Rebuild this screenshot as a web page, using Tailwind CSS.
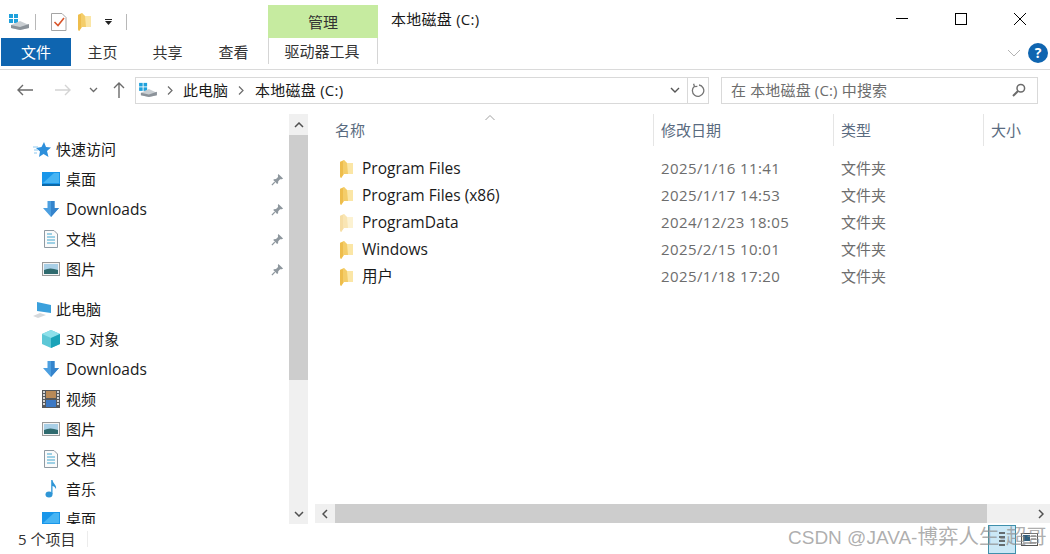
<!DOCTYPE html>
<html lang="zh">
<head>
<meta charset="utf-8">
<script src="https://cdn.jsdelivr.net/npm/@tailwindcss/browser@4"></script>
<title>本地磁盘 (C:)</title>
</head>
<body class="w-[1050px] h-[554px] overflow-hidden bg-white text-[15px] text-[#1a1a1a] font-['Open_Sans','Noto_Sans_CJK_SC',sans-serif] relative">
<svg class="hidden">
  <defs>
    <symbol id="drive" viewBox="0 0 22 18"><rect x="1" y="1" width="4" height="4" fill="#1fa1dc"/><rect x="6" y="1" width="4" height="4" fill="#1fa1dc"/><rect x="1" y="6" width="4" height="4" fill="#1fa1dc"/><rect x="6" y="6" width="4" height="4" fill="#1fa1dc"/><path d="M3 12 L12 8 L21 12 L21 15 L12 17 L3 15Z" fill="#c9ced2"/><path d="M3 12 L12 14 L21 11 L21 15 L12 17 L3 15Z" fill="#8b9299"/></symbol>
    <symbol id="folder" viewBox="0 0 13 18"><path d="M0 2 L4 0 L7 3 L13 3 L13 14 L4 14 L1 18 L0 16Z" fill="#fbe6a6"/><path d="M0 2 L4 0 L7 3 L8 14 L4 14 L1 18 L0 16Z" fill="#f4cd69"/><path d="M0 2 L3 1 L3 15 L1 18 L0 16Z" fill="#eebd4c"/></symbol>
    <symbol id="desktop" viewBox="0 0 18 14"><rect width="18" height="14" fill="#1896ea"/><path d="M1 11 L12 1 L17 1 L17 11Z" fill="#47b4f3"/><rect y="12" width="18" height="2" fill="#0b68a8"/></symbol>
    <symbol id="down" viewBox="0 0 18 18"><path d="M5.500 1 H12.500 V8 H17 L9 17 L1 8 H5.500Z" fill="#4c9fe0"/><path d="M9 1 H12.500 V8 H17 L9 17Z" fill="#3584cc"/></symbol>
    <symbol id="doc" viewBox="0 0 14 18"><path d="M.5.5 H10 L13.500 4 V17.500 H.5Z" fill="#fafafa" stroke="#8f9aa3"/><path d="M3 4 H8 M3 7 H11 M3 10 H11 M3 13 H11" stroke="#41a5cf" stroke-width="1.200"/></symbol>
    <symbol id="pic" viewBox="0 0 18 14"><rect x=".5" y=".5" width="17" height="13" fill="#f4f4f4" stroke="#9a9a9a"/><rect x="2" y="2" width="14" height="10" fill="#a9cfe6"/><path d="M2 8 Q8 5 16 8 V12 H2Z" fill="#2f6a6e"/></symbol>
    <symbol id="pin" viewBox="0 0 14 14"><path d="M8 1 L13 6 L11.600 6.800 L9.800 6.600 L7.800 8.800 L7.600 11 L6.600 11.800 L2.400 7.600 L3.200 6.600 L5.400 6.400 L7.600 4.400 L7.400 2.400Z" fill="#8e979e"/><path d="M4 9.800 L1 13" stroke="#8e979e" stroke-width="1.400"/></symbol>
  </defs>
</svg>

<header class="h-[38px] flex items-end relative">
  <div class="w-[268px] h-[38px] flex items-center pl-[8px] pt-[5px]">
    <svg class="w-[22px] h-[18px]"><use href="#drive"/></svg>
    <div class="w-px h-4 bg-[#b8b8b8] ml-[5px]"></div>
    <svg class="w-[16px] h-[18px] ml-[15px]" viewBox="0 0 16 18"><path d="M.5.5 H11 L15 4.500 V17.500 H.5Z" fill="#fff" stroke="#a5a5a5"/><path d="M3.500 9 L7 12.500 L13 5" fill="none" stroke="#d9552b" stroke-width="1.600"/></svg>
    <svg class="w-[13px] h-[18px] ml-[11px]"><use href="#folder"/></svg>
    <svg class="w-[7px] h-[6px] ml-[14px]" viewBox="0 0 7 6"><path d="M0 0 H7 V1 H0Z M0 2 H7 L3.500 6Z" fill="#222"/></svg>
    <div class="w-px h-4 bg-[#b8b8b8] ml-[14px]"></div>
  </div>
  <div class="w-[110px] h-[33px] pt-[2px] bg-[#c6eba0] flex items-center justify-center text-[#333]">管理</div>
  <div class="ml-[13px] self-start pt-[9px] leading-[20px] tracking-[.25px]">本地磁盘 (C:)</div>
  <div class="ml-auto self-start flex h-[38px]">
    <div class="w-[59px] flex items-center justify-center pb-[1px]"><div class="w-3 h-px bg-black mb-[1px]"></div></div>
    <div class="w-[59px] flex items-center justify-center"><div class="w-3 h-3 border border-black"></div></div>
    <div class="w-[60px] flex items-center justify-center"><svg class="w-3 h-3" viewBox="0 0 12 12"><path d="M0 0 L12 12 M12 0 L0 12" stroke="#000" stroke-width="1"/></svg></div>
  </div>
</header>

<nav class="h-[32px] flex items-start border-b border-[#dadada] text-[#333]">
  <div class="ml-px w-[70px] h-[28px] bg-[#0f65b0] text-white flex items-center justify-center">文件</div>
  <div class="w-[65px] h-[28px] flex items-center justify-center pr-[2px]">主页</div>
  <div class="w-[65px] h-[28px] flex items-center justify-center pr-[2px]">共享</div>
  <div class="w-[65px] h-[28px] flex items-center justify-center">查看</div>
  <div class="ml-[2px] w-[110px] h-[26px] border-x border-[#d5d5d5] flex items-center justify-center pr-[2px]">驱动器工具</div>
  <div class="ml-auto flex items-center h-[28px] pr-[2px]">
    <svg class="w-[12px] h-[7px] mr-[8px] mt-[2px]" viewBox="0 0 12 7"><path d="M0 0 L6 6 L12 0" fill="none" stroke="#b3b3b3"/></svg>
    <div class="w-5 h-5 rounded-full bg-[#0f65b0] text-white text-[14px] font-bold flex items-center justify-center leading-none mt-[2px]">?</div>
  </div>
</nav>

<div class="h-[40px] flex items-center">
  <div class="w-[135px] flex items-center shrink-0 pl-[17px]">
    <svg class="w-[16px] h-[12px]" viewBox="0 0 16 12"><path d="M16 6 H1 M6 1 L1 6 L6 11" fill="none" stroke="#6b6b6b" stroke-width="1.400"/></svg>
    <svg class="w-[16px] h-[12px] ml-[22px]" viewBox="0 0 16 12"><path d="M0 6 H15 M10 1 L15 6 L10 11" fill="none" stroke="#d4d4d4" stroke-width="1.400"/></svg>
    <svg class="w-[9px] h-[6px] ml-[18px]" viewBox="0 0 9 6"><path d="M1 1 L4.500 4.500 L8 1" fill="none" stroke="#6b6b6b" stroke-width="1.300"/></svg>
    <svg class="w-[12px] h-[16px] ml-[15px]" viewBox="0 0 12 16"><path d="M6 16 V1 M1 6 L6 1 L11 6" fill="none" stroke="#6b6b6b" stroke-width="1.400"/></svg>
  </div>
  <div class="w-[574px] h-[27px] border border-[#d9d9d9] flex items-center shrink-0">
    <svg class="w-[20px] h-[16px] ml-[2px]"><use href="#drive"/></svg>
    <svg class="w-[6px] h-[9px] ml-[9px]" viewBox="0 0 6 9"><path d="M1 .5 L5 4.500 L1 8.500" fill="none" stroke="#6b6b6b" stroke-width="1.200"/></svg>
    <span class="ml-[10px]">此电脑</span>
    <svg class="w-[6px] h-[9px] ml-[10px]" viewBox="0 0 6 9"><path d="M1 .5 L5 4.500 L1 8.500" fill="none" stroke="#6b6b6b" stroke-width="1.200"/></svg>
    <span class="ml-[11px] tracking-[.25px]">本地磁盘 (C:)</span>
    <svg class="w-[10px] h-[6px] ml-auto mr-[7px]" viewBox="0 0 10 6"><path d="M1 1 L5 5 L9 1" fill="none" stroke="#555" stroke-width="1.400"/></svg>
    <div class="w-[21px] h-full border-l border-[#d9d9d9] flex items-center justify-center">
      <svg class="w-[14px] h-[15px]" viewBox="0 0 14 15"><path d="M8 2 A5.700 5.700 0 1 1 3.500 3.200 M2.600 .8 L3.500 3.600 L6.400 3.400" fill="none" stroke="#757575" stroke-width="1.300"/></svg>
    </div>
  </div>
  <div class="ml-[12px] w-[317px] h-[27px] border border-[#d9d9d9] flex items-center text-[#6d6d6d] pl-[9px] pr-[11px] shrink-0">
    <span class="tracking-[.15px]">在 本地磁盘 (C:) 中搜索</span>
    <svg class="w-[14px] h-[14px] ml-auto" viewBox="0 0 14 14"><circle cx="8.800" cy="5.200" r="3.800" fill="none" stroke="#6b6b6b" stroke-width="1.500"/><path d="M6 8 L1 13" stroke="#6b6b6b" stroke-width="2"/></svg>
  </div>
</div>

<main class="h-[414px] flex">
  <aside class="w-[289px] h-full overflow-hidden pt-[24px] shrink-0">
    <div class="h-[30px] flex items-center pl-[33px]"><svg class="w-[18px] h-[17px] mr-[5px]" viewBox="0 0 18 17"><path d="M11 1 L13 6 L18 6.500 L14 10 L15.500 16 L10.500 13 L6 16 L7 10.500 L3 7 L8.500 6Z" fill="#2d8fdb"/><path d="M0 6 H5 M1 9 H5 M1 12 H4" stroke="#8fc9ef"/></svg>快速访问</div>
    <div class="h-[30px] flex items-center pl-[42px] pr-[5px]"><svg class="w-[18px] h-[14px] mr-[6px]"><use href="#desktop"/></svg>桌面<svg class="w-[13px] h-[13px] ml-auto"><use href="#pin"/></svg></div>
    <div class="h-[30px] flex items-center pl-[42px] pr-[5px]"><svg class="w-[18px] h-[18px] mr-[6px]"><use href="#down"/></svg><span class="text-[15.500px] pt-[2px]">Downloads</span><svg class="w-[13px] h-[13px] ml-auto"><use href="#pin"/></svg></div>
    <div class="h-[30px] flex items-center pl-[44px] pr-[5px]"><svg class="w-[14px] h-[18px] mr-[8px]"><use href="#doc"/></svg>文档<svg class="w-[13px] h-[13px] ml-auto"><use href="#pin"/></svg></div>
    <div class="h-[30px] flex items-center pl-[42px] pr-[5px]"><svg class="w-[18px] h-[14px] mr-[6px]"><use href="#pic"/></svg>图片<svg class="w-[13px] h-[13px] ml-auto"><use href="#pin"/></svg></div>
    <div class="h-[30px] mt-[10px] flex items-center pl-[32px]"><svg class="w-[20px] h-[17px] mr-[4px]" viewBox="0 0 20 17"><path d="M5 1 L19 4 V12 L5 10Z" fill="#3aa0dc"/><path d="M1 15 L8 12 L14 14 L6 17Z" fill="#d6d9dc"/></svg>此电脑</div>
    <div class="h-[30px] flex items-center pl-[42px]"><svg class="w-[18px] h-[18px] mr-[6px]" viewBox="0 0 18 18"><path d="M9 0 L18 4 V14 L9 18 L0 14 V4Z" fill="#5cc7d6"/><path d="M9 0 L18 4 L9 8 L0 4Z" fill="#8de0ea"/><path d="M9 8 L18 4 V14 L9 18Z" fill="#1aa3b8"/></svg>3D 对象</div>
    <div class="h-[30px] flex items-center pl-[42px]"><svg class="w-[18px] h-[18px] mr-[6px]"><use href="#down"/></svg><span class="text-[15.500px] pt-[2px]">Downloads</span></div>
    <div class="h-[30px] flex items-center pl-[42px]"><svg class="w-[18px] h-[18px] mr-[6px]" viewBox="0 0 18 18"><rect width="18" height="18" fill="#55585c"/><rect x="4" y="1" width="10" height="7" fill="#b98a58"/><rect x="4" y="10" width="10" height="7" fill="#3b78c4"/><path d="M1 2 H3 M1 5 H3 M1 8 H3 M1 11 H3 M1 14 H3 M15 2 H17 M15 5 H17 M15 8 H17 M15 11 H17 M15 14 H17" stroke="#fff" stroke-width="1.300"/></svg>视频</div>
    <div class="h-[30px] flex items-center pl-[42px]"><svg class="w-[18px] h-[14px] mr-[6px]"><use href="#pic"/></svg>图片</div>
    <div class="h-[30px] flex items-center pl-[44px]"><svg class="w-[14px] h-[18px] mr-[8px]"><use href="#doc"/></svg>文档</div>
    <div class="h-[30px] flex items-center pl-[45px]"><svg class="w-[12px] h-[18px] mr-[9px]" viewBox="0 0 12 18"><ellipse cx="4" cy="14.500" rx="3.500" ry="3" fill="#2f96d6"/><path d="M6.200 14 V0 H7.500 C8 4 12 5 11 9 C10 7 8.500 6 7.500 6 V14Z" fill="#2f96d6"/></svg>音乐</div>
    <div class="h-[30px] flex items-center pl-[42px]"><svg class="w-[18px] h-[14px] mr-[6px]"><use href="#desktop"/></svg>桌面</div>
  </aside>

  <div class="w-[19px] h-[410px] mt-[4px] bg-[#f0f0f0] flex flex-col shrink-0">
    <div class="h-[21px] flex items-center justify-center"><svg class="w-[10px] h-[6px]" viewBox="0 0 10 6"><path d="M1 5 L5 1 L9 5" fill="none" stroke="#505050" stroke-width="1.500"/></svg></div>
    <div class="h-[245px] bg-[#cdcdcd]"></div>
    <div class="mt-auto h-[21px] flex items-center justify-center"><svg class="w-[10px] h-[6px]" viewBox="0 0 10 6"><path d="M1 1 L5 5 L9 1" fill="none" stroke="#505050" stroke-width="1.500"/></svg></div>
  </div>

  <section class="flex-1 min-w-0 flex flex-col pl-[7px]">
    <div class="h-[32px] mt-[4px] flex relative text-[#5a6b80]">
      <div class="w-[339px] border-r border-[#e5e5e5] flex items-center pl-[20px] relative">名称<svg class="absolute left-[170px] top-[1px] w-[10px] h-[6px]" viewBox="0 0 10 6"><path d="M.5 5 L5 .5 L9.500 5" fill="none" stroke="#a0a0a0"/></svg></div>
      <div class="w-[180px] border-r border-[#e5e5e5] flex items-center pl-[7px]">修改日期</div>
      <div class="w-[150px] border-r border-[#e5e5e5] flex items-center pl-[7px]">类型</div>
      <div class="flex items-center pl-[7px]">大小</div>
    </div>
    <div class="mt-[9px] text-[15.500px]">
      <div class="h-[27px] flex items-center"><svg class="w-[13px] h-[18px] ml-[25px] mr-[9px]"><use href="#folder"/></svg><span class="w-[299px]">Program Files</span><span class="w-[180px] text-[#6d6d6d] text-[15px] tracking-[.4px]">2025/1/16 11:41</span><span class="text-[15px] text-[#6d6d6d]">文件夹</span></div>
      <div class="h-[27px] flex items-center"><svg class="w-[13px] h-[18px] ml-[25px] mr-[9px]"><use href="#folder"/></svg><span class="w-[299px]">Program Files (x86)</span><span class="w-[180px] text-[#6d6d6d] text-[15px] tracking-[.4px]">2025/1/17 14:53</span><span class="text-[15px] text-[#6d6d6d]">文件夹</span></div>
      <div class="h-[27px] flex items-center"><svg class="w-[13px] h-[18px] ml-[25px] mr-[9px] opacity-50"><use href="#folder"/></svg><span class="w-[299px]">ProgramData</span><span class="w-[180px] text-[#6d6d6d] text-[15px] tracking-[.4px]">2024/12/23 18:05</span><span class="text-[15px] text-[#6d6d6d]">文件夹</span></div>
      <div class="h-[27px] flex items-center"><svg class="w-[13px] h-[18px] ml-[25px] mr-[9px]"><use href="#folder"/></svg><span class="w-[299px]">Windows</span><span class="w-[180px] text-[#6d6d6d] text-[15px] tracking-[.4px]">2025/2/15 10:01</span><span class="text-[15px] text-[#6d6d6d]">文件夹</span></div>
      <div class="h-[27px] flex items-center"><svg class="w-[13px] h-[18px] ml-[25px] mr-[9px]"><use href="#folder"/></svg><span class="w-[299px]">用户</span><span class="w-[180px] text-[#6d6d6d] text-[15px] tracking-[.4px]">2025/1/18 17:20</span><span class="text-[15px] text-[#6d6d6d]">文件夹</span></div>
    </div>
    <div class="mt-auto h-[19px] mb-px bg-[#f0f0f0] flex items-center">
      <div class="w-[20px] flex items-center justify-center"><svg class="w-[6px] h-[10px]" viewBox="0 0 6 10"><path d="M5 1 L1 5 L5 9" fill="none" stroke="#505050" stroke-width="1.500"/></svg></div>
      <div class="w-[652px] h-full bg-[#cdcdcd]"></div>
      <div class="ml-auto mr-[6px] flex items-center"><svg class="w-[6px] h-[10px]" viewBox="0 0 6 10"><path d="M1 1 L5 5 L1 9" fill="none" stroke="#505050" stroke-width="1.500"/></svg></div>
    </div>
  </section>
</main>

<footer class="h-[30px] flex items-center text-[#333] relative">
  <span class="ml-[18px]">5 个项目</span>
  <div class="ml-[12px] w-px h-4 bg-[#ececec]"></div>
  <div class="ml-auto flex items-center h-full mr-[8px]">
    <div class="w-[28px] h-[29px] bg-[#cbe8f6] border border-[#3f90ac] flex items-center justify-center">
      <svg class="w-[8px] h-[14px]" viewBox="0 0 8 14"><path d="M1 1 H7 M1 5 H7 M1 9 H7 M1 13 H7" stroke="#444" stroke-width="1.500"/></svg>
    </div>
    <div class="w-[26px] h-full flex items-center justify-center">
      <svg class="w-[17px] h-[13px]" viewBox="0 0 17 13"><rect x=".5" y=".5" width="16" height="12" fill="#fff" stroke="#555"/><rect x="2" y="2" width="7" height="6" fill="#30607e"/><path d="M10 3 H15 M10 6 H15 M2 10 H15" stroke="#666"/></svg>
    </div>
  </div>
</footer>
<div class="absolute left-[788px] top-[525px] text-[19px] leading-[24px] text-[#8c8c8c]/70 whitespace-nowrap font-['Liberation_Sans','Noto_Sans_CJK_SC',sans-serif]">CSDN @JAVA-<span class="text-[20.500px]">博弈人生</span>-<span class="text-[20.500px]">超哥</span></div>
</body>
</html>
